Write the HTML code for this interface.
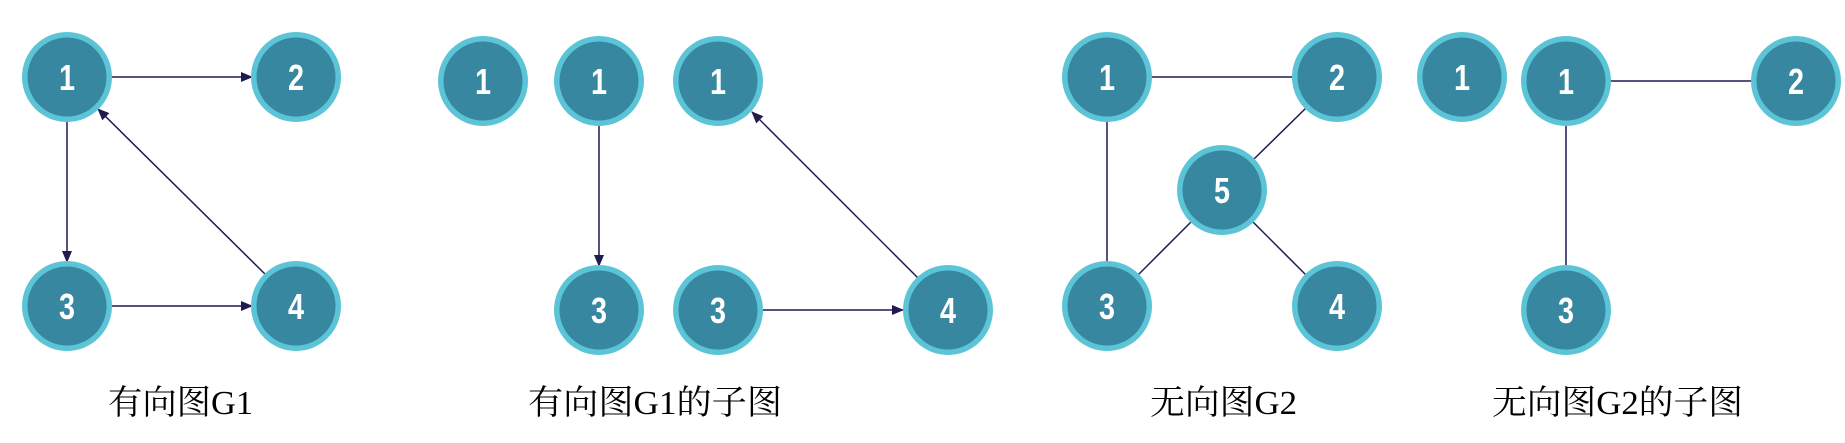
<!DOCTYPE html>
<html><head><meta charset="utf-8"><style>
html,body{margin:0;padding:0;background:#fff;}
body{width:1845px;height:443px;overflow:hidden;}
svg{display:block;}
.n text{font-family:"Liberation Sans",sans-serif;font-weight:bold;font-size:36px;fill:#fff;text-anchor:middle;}
.cap{font-family:"Liberation Serif","Noto Serif CJK SC",serif;font-size:34px;fill:#000;}
line{stroke:#1f1a50;stroke-width:1.5;}
</style></head><body>
<svg width="1845" height="443" viewBox="0 0 1845 443">
<defs>
<marker id="a" markerWidth="12" markerHeight="10" refX="11" refY="5" orient="auto" markerUnits="userSpaceOnUse">
<path d="M0,0 L12,5 L0,10 Z" fill="#1f1a50"/></marker>
<g id="c"><circle r="45" fill="#5bc4d6"/><circle r="39.5" fill="#36879f"/></g>
</defs>
<line x1="110" y1="77" x2="252" y2="77" marker-end="url(#a)"/>
<line x1="67" y1="120" x2="67" y2="262" marker-end="url(#a)"/>
<line x1="110" y1="306" x2="252" y2="306" marker-end="url(#a)"/>
<line x1="267" y1="276" x2="98" y2="109" marker-end="url(#a)"/>
<line x1="599" y1="124" x2="599" y2="266" marker-end="url(#a)"/>
<line x1="761" y1="310" x2="903" y2="310" marker-end="url(#a)"/>
<line x1="919" y1="279" x2="752" y2="112" marker-end="url(#a)"/>
<line x1="1150" y1="77" x2="1294" y2="77"/>
<line x1="1107" y1="120" x2="1107" y2="263"/>
<line x1="1306" y1="108" x2="1254" y2="159"/>
<line x1="1192" y1="221" x2="1138" y2="275"/>
<line x1="1252" y1="221" x2="1306" y2="275"/>
<line x1="1609" y1="81" x2="1753" y2="81"/>
<line x1="1566" y1="124" x2="1566" y2="267"/>
<g class="n">
<g transform="translate(67,77)"><use href="#c"/><text y="13" transform="scale(0.8,1)">1</text></g>
<g transform="translate(296,77)"><use href="#c"/><text y="13" transform="scale(0.8,1)">2</text></g>
<g transform="translate(67,306)"><use href="#c"/><text y="13" transform="scale(0.8,1)">3</text></g>
<g transform="translate(296,306)"><use href="#c"/><text y="13" transform="scale(0.8,1)">4</text></g>

<g transform="translate(483,81)"><use href="#c"/><text y="13" transform="scale(0.8,1)">1</text></g>
<g transform="translate(599,81)"><use href="#c"/><text y="13" transform="scale(0.8,1)">1</text></g>
<g transform="translate(718,81)"><use href="#c"/><text y="13" transform="scale(0.8,1)">1</text></g>
<g transform="translate(599,310)"><use href="#c"/><text y="13" transform="scale(0.8,1)">3</text></g>
<g transform="translate(718,310)"><use href="#c"/><text y="13" transform="scale(0.8,1)">3</text></g>
<g transform="translate(948,310)"><use href="#c"/><text y="13" transform="scale(0.8,1)">4</text></g>

<g transform="translate(1107,77)"><use href="#c"/><text y="13" transform="scale(0.8,1)">1</text></g>
<g transform="translate(1337,77)"><use href="#c"/><text y="13" transform="scale(0.8,1)">2</text></g>
<g transform="translate(1222,190)"><use href="#c"/><text y="13" transform="scale(0.8,1)">5</text></g>
<g transform="translate(1107,306)"><use href="#c"/><text y="13" transform="scale(0.8,1)">3</text></g>
<g transform="translate(1337,306)"><use href="#c"/><text y="13" transform="scale(0.8,1)">4</text></g>

<g transform="translate(1462,77)"><use href="#c"/><text y="13" transform="scale(0.8,1)">1</text></g>
<g transform="translate(1566,81)"><use href="#c"/><text y="13" transform="scale(0.8,1)">1</text></g>
<g transform="translate(1796,81)"><use href="#c"/><text y="13" transform="scale(0.8,1)">2</text></g>
<g transform="translate(1566,310)"><use href="#c"/><text y="13" transform="scale(0.8,1)">3</text></g>
</g>
<text class="cap" x="108" y="414" textLength="145" lengthAdjust="spacingAndGlyphs">有向图G1</text>
<text class="cap" x="528" y="414" textLength="254" lengthAdjust="spacingAndGlyphs">有向图G1的子图</text>
<text class="cap" x="1150" y="414" textLength="147" lengthAdjust="spacingAndGlyphs">无向图G2</text>
<text class="cap" x="1492" y="414" textLength="251" lengthAdjust="spacingAndGlyphs">无向图G2的子图</text>
</svg>
</body></html>
